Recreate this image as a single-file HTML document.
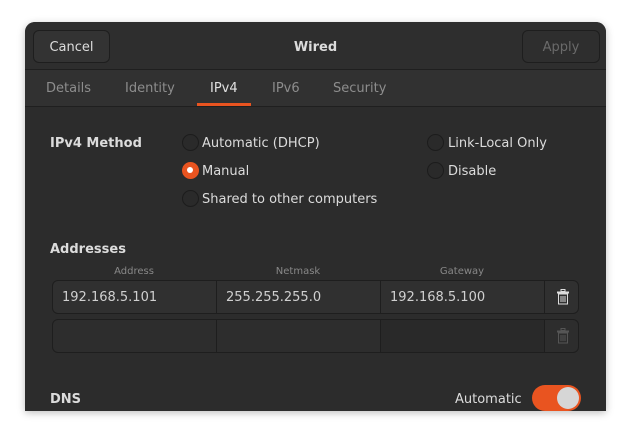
<!DOCTYPE html><html><head><style>
body{margin:0;width:632px;height:440px;background:#fff;position:relative;overflow:hidden;font-family:"DejaVu Sans",sans-serif;}
.w{position:absolute;left:25px;top:22px;width:581px;height:389px;background:#2c2c2c;border-radius:10px 10px 0 0;overflow:hidden;box-shadow:0 2px 8px rgba(0,0,0,.25)}
.a{position:absolute;white-space:nowrap}
.hd{position:absolute;left:0;top:0;width:581px;height:47px;background:#2e2e2e;border-bottom:1px solid #1f1f1f}
.tb{position:absolute;left:0;top:48px;width:581px;height:36px;background:#313131;border-bottom:1px solid #1f1f1f}
.btn{position:absolute;top:8px;height:31px;border:1px solid #1e1e1e;border-radius:6px;background:#333;color:#ddd;font-size:13px;text-align:center;line-height:33px}
.t{color:#8d8d8d;font-size:13px;top:59px}
.r{position:absolute;width:15px;height:15px;border-radius:50%;border:1px solid #1c1c1c;background:#2a2a2a}
.l{color:#dcdcdc;font-size:13px;padding-top:2px}
.b{color:#dcdcdc;font-size:13px;font-weight:bold;padding-top:2px}
.ch{color:#888;font-size:10px;top:244px;width:164px;text-align:center}
.row{position:absolute;left:27px;width:525px;height:32px;border:1px solid #1e1e1e;border-radius:6px;background:#303030;overflow:hidden}
.c{position:absolute;top:0;height:32px;border-right:1px solid #1e1e1e;color:#d0d0d0;font-size:13px;line-height:33px;padding-left:9px;box-sizing:border-box}
</style></head><body>
<div class="w">
<div class="hd"></div>
<div class="btn" style="left:8px;width:75px">Cancel</div>
<div class="a b" style="left:0;width:581px;text-align:center;top:16px">Wired</div>
<div class="btn" style="left:497px;width:76px;color:#6a6a6a;background:#2e2e2e">Apply</div>
<div class="tb"></div>
<div class="a t" style="left:21px">Details</div>
<div class="a t" style="left:100px">Identity</div>
<div class="a t" style="left:185px;color:#e0e0e0">IPv4</div>
<div class="a t" style="left:247px">IPv6</div>
<div class="a t" style="left:308px">Security</div>
<div class="a" style="left:172px;top:81px;width:54px;height:3px;background:#e95420"></div>
<div class="a b" style="left:25px;top:112px">IPv4 Method</div>
<div class="r" style="left:157px;top:112px"></div><div class="a l" style="left:177px;top:112px">Automatic (DHCP)</div>
<div class="r" style="left:157px;top:140px;background:#e95420;border-color:#e95420"></div><div class="a" style="left:162px;top:145px;width:6px;height:6px;border-radius:50%;background:#fff"></div><div class="a l" style="left:177px;top:140px">Manual</div>
<div class="r" style="left:157px;top:168px"></div><div class="a l" style="left:177px;top:168px">Shared to other computers</div>
<div class="r" style="left:402px;top:112px"></div><div class="a l" style="left:423px;top:112px">Link-Local Only</div>
<div class="r" style="left:402px;top:140px"></div><div class="a l" style="left:423px;top:140px">Disable</div>
<div class="a b" style="left:25px;top:218px">Addresses</div>
<div class="a ch" style="left:27px">Address</div>
<div class="a ch" style="left:191px">Netmask</div>
<div class="a ch" style="left:355px">Gateway</div>
<div class="row" style="top:258px">
<div class="c" style="left:0;width:164px">192.168.5.101</div>
<div class="c" style="left:164px;width:164px">255.255.255.0</div>
<div class="c" style="left:328px;width:164px">192.168.5.100</div>
<svg class="a" style="left:503px;top:8px" width="14" height="16" viewBox="0 0 14 16"><rect x="5" y="0.5" width="4" height="2" fill="none" stroke="#ddd"/><rect x="1" y="2.5" width="12" height="2" fill="#ddd"/><rect x="2.5" y="5" width="9" height="10" fill="none" stroke="#ddd"/><path d="M5 7v6M7 7v6M9 7v6" stroke="#ddd"/></svg>
</div>
<div class="row" style="top:297px;background:#2d2d2d">
<div class="c" style="left:0;width:164px"></div>
<div class="c" style="left:164px;width:164px"></div>
<div class="c" style="left:328px;width:164px;background:#292929"></div>
<svg class="a" style="left:503px;top:8px" width="14" height="16" viewBox="0 0 14 16"><rect x="5" y="0.5" width="4" height="2" fill="none" stroke="#555"/><rect x="1" y="2.5" width="12" height="2" fill="#555"/><rect x="2.5" y="5" width="9" height="10" fill="none" stroke="#555"/><path d="M5 7v6M7 7v6M9 7v6" stroke="#555"/></svg>
</div>
<div class="a b" style="left:25px;top:368px">DNS</div>
<div class="a l" style="left:430px;top:368px">Automatic</div>
<div class="a" style="left:507px;top:363px;width:49px;height:26px;border-radius:13px;background:#e95420"></div>
<div class="a" style="left:532px;top:365px;width:22px;height:22px;border-radius:50%;background:#d6d6d6"></div>
</div>
</body></html>
